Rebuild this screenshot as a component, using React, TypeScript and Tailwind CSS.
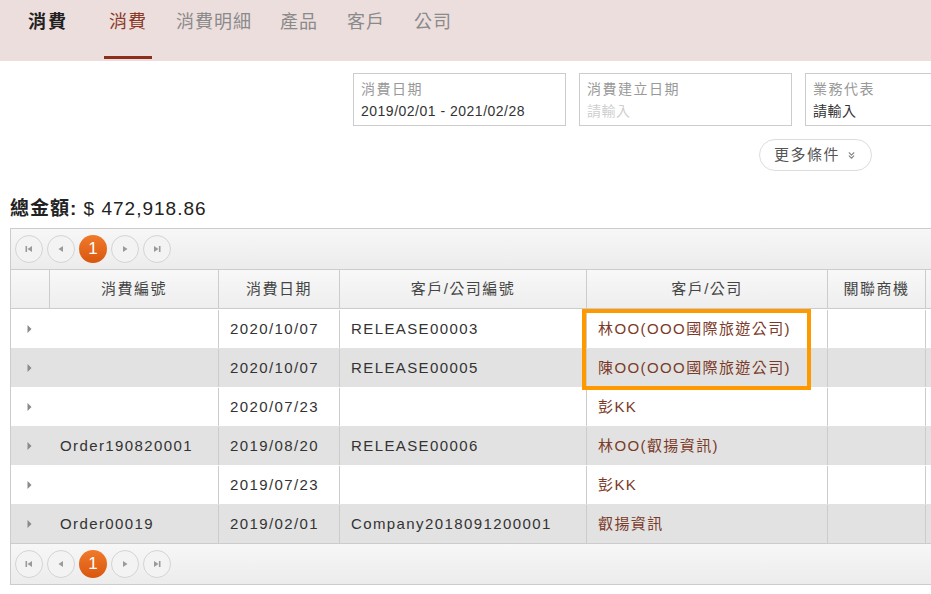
import { ChevronsDown } from 'lucide-react';

const FONT = { fontFamily: '"Liberation Sans", Arial, "Noto Sans CJK TC", sans-serif' };

const rows = [
  { no: '', date: '2020/10/07', code: 'RELEASE00003', cust: '林OO(OOO國際旅遊公司)' },
  { no: '', date: '2020/10/07', code: 'RELEASE00005', cust: '陳OO(OOO國際旅遊公司)' },
  { no: '', date: '2020/07/23', code: '', cust: '彭KK' },
  { no: 'Order190820001', date: '2019/08/20', code: 'RELEASE00006', cust: '林OO(叡揚資訊)' },
  { no: '', date: '2019/07/23', code: '', cust: '彭KK' },
  { no: 'Order00019', date: '2019/02/01', code: 'Company2018091200001', cust: '叡揚資訊' },
];

function PagerIcon({ kind }: { kind: 'first' | 'prev' | 'next' | 'last' }) {
  return (
    <svg width="10" height="10" viewBox="0 0 10 10" fill="#9a9a9a">
      {kind === 'first' && (
        <>
          <rect x="1.5" y="2" width="1.6" height="6" />
          <polygon points="8,2 3.5,5 8,8" />
        </>
      )}
      {kind === 'prev' && <polygon points="7,2 2.5,5 7,8" />}
      {kind === 'next' && <polygon points="3,2 7.5,5 3,8" />}
      {kind === 'last' && (
        <>
          <polygon points="2,2 6.5,5 2,8" />
          <rect x="6.9" y="2" width="1.6" height="6" />
        </>
      )}
    </svg>
  );
}

function Pager({ top }: { top?: boolean }) {
  const btn = 'w-[28px] h-[28px] rounded-full border border-[#d4d4d4] bg-[#f3f3f3] flex items-center justify-center';
  return (
    <div
      className={`h-[41px] flex items-center pl-[4px] gap-[4px] bg-gradient-to-b from-[#f7f7f7] to-[#ececec] ${
        top ? 'border-b border-[#cccccc]' : 'border-t border-[#cccccc]'
      }`}
    >
      <div className={btn}><PagerIcon kind="first" /></div>
      <div className={btn}><PagerIcon kind="prev" /></div>
      <div className="w-[28px] h-[28px] rounded-full bg-gradient-to-b from-[#f07a2a] to-[#d9560c] flex items-center justify-center text-white text-[17px]">
        1
      </div>
      <div className={btn}><PagerIcon kind="next" /></div>
      <div className={btn}><PagerIcon kind="last" /></div>
    </div>
  );
}

function Filter({ label, value, placeholder }: { label: string; value: string; placeholder?: boolean }) {
  return (
    <div className="w-[213px] h-[53px] border border-[#cccccc] px-[7px] pt-[5px] shrink-0">
      <div className="text-[14px] text-[#999999] leading-[20px] tracking-[1.5px]">{label}</div>
      <div
        className={`text-[14px] leading-[24px] tracking-[0.5px] ${placeholder ? 'text-[#cfcfcf]' : 'text-[#333333]'}`}
      >
        {value}
      </div>
    </div>
  );
}

const cols = 'grid grid-cols-[39px_169px_121px_247px_241px_98px_120px]';

export default function App() {
  return (
    <div className="w-[931px] h-[594px] overflow-hidden bg-white" style={FONT}>
      {/* Top bar */}
      <div className="h-[61px] bg-[#ecdedd] flex items-start pl-[28px] tracking-[1px]">
        <div className="text-[18px] font-bold text-[#222222] mt-[10px] leading-[24px] tracking-[2px]">消費</div>
        <div className="flex ml-[36px]">
          <div className="h-[59px] px-[5px] border-b-[3px] border-[#8b2e1a] text-[18px] text-[#8b3a28] pt-[10px] leading-[24px]">
            消費
          </div>
          <div className="ml-[24px] text-[18px] text-[#8a8a8a] pt-[10px] leading-[24px]">消費明細</div>
          <div className="ml-[28px] text-[18px] text-[#8a8a8a] pt-[10px] leading-[24px]">產品</div>
          <div className="ml-[29px] text-[18px] text-[#8a8a8a] pt-[10px] leading-[24px]">客戶</div>
          <div className="ml-[29px] text-[18px] text-[#8a8a8a] pt-[10px] leading-[24px]">公司</div>
        </div>
      </div>

      {/* Filters */}
      <div className="flex gap-[13px] pl-[353px] mt-[12px] w-[1200px]">
        <Filter label="消費日期" value="2019/02/01 - 2021/02/28" />
        <Filter label="消費建立日期" value="請輸入" placeholder />
        <Filter label="業務代表" value="請輸入" />
      </div>
      <div className="flex pl-[759px] mt-[13px]">
        <div className="w-[113px] h-[32px] rounded-full border border-[#dddddd] flex items-center justify-center gap-[6px] text-[15px] text-[#555555] tracking-[1.5px]">
          更多條件
          <ChevronsDown size={11} strokeWidth={2.5} className="text-[#888888]" />
        </div>
      </div>

      {/* Total */}
      <div className="pl-[10px] mt-[25px] text-[19px] text-[#222222] leading-[26px] tracking-[1px]">
        <span className="font-bold">總金額:</span> $ 472,918.86
      </div>

      {/* Grid */}
      <div className="ml-[10px] mt-[6px] w-[1040px] border border-[#cccccc]">
        <Pager top />
        <div
          className={`${cols} h-[39px] bg-gradient-to-b from-[#f8f8f8] to-[#eeeeee] border-b border-[#cccccc] text-[15px] text-[#444444] tracking-[1.5px]`}
        >
          <div className="border-r border-[#cccccc]" />
          {['消費編號', '消費日期', '客戶/公司編號', '客戶/公司', '關聯商機', ''].map((h, i) => (
            <div key={i} className="border-r border-[#cccccc] flex items-center justify-center">
              {h}
            </div>
          ))}
        </div>
        <div className="relative">
          {rows.map((r, i) => (
            <div
              key={i}
              className={`${cols} h-[39px] text-[15px] text-[#333333] tracking-[1.4px] pt-[1px] ${
                i % 2 === 1 ? 'bg-[#e2e2e2]' : 'bg-white'
              }`}
            >
              <div className="flex items-center justify-center pr-[2px]">
                <svg width="7" height="10" viewBox="0 0 7 10" fill="#8a8a8a">
                  <polygon points="1.5,1 5.5,5 1.5,9" />
                </svg>
              </div>
              <div className="border-r border-[#cccccc] flex items-center pl-[10px]">{r.no}</div>
              <div className="border-r border-[#cccccc] flex items-center pl-[11px]">{r.date}</div>
              <div className="border-r border-[#cccccc] flex items-center pl-[11px]">{r.code}</div>
              <div className="border-r border-[#cccccc] flex items-center pl-[11px] text-[#7b3a28]">{r.cust}</div>
              <div className="border-r border-[#cccccc]" />
              <div className="border-r border-[#cccccc]" />
            </div>
          ))}
          {/* highlight */}
          <div className="absolute left-[571px] top-[0px] w-[229px] h-[81px] border-[4px] border-[#ff9900] pointer-events-none" />
        </div>
        <Pager />
      </div>
    </div>
  );
}
